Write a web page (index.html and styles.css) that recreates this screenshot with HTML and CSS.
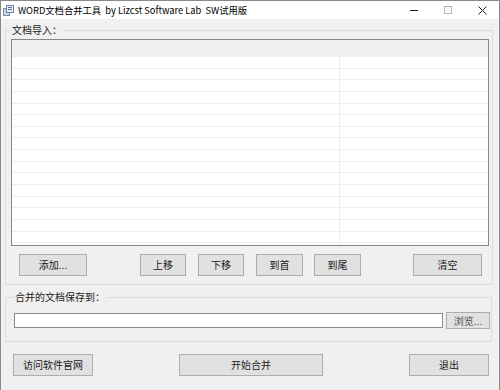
FILE: index.html
```html
<!DOCTYPE html>
<html lang="zh-CN">
<head>
<meta charset="utf-8">
<title>WORD文档合并工具</title>
<link rel="stylesheet" href="styles.css">
</head>
<body>
<div class="window">
  <div class="titlebar">
    <svg class="appicon" width="11" height="11" viewBox="0 0 11 11">
      <rect x="0.5" y="3.5" width="6" height="7" fill="#c9d6e6" stroke="#7d8fa8"/>
      <rect x="3.5" y="0.5" width="7" height="7" fill="#e8eef6" stroke="#6f86a6"/>
      <rect x="5" y="2" width="4" height="1" fill="#4f74a8"/>
      <rect x="5" y="4" width="4" height="1" fill="#4f74a8"/>
    </svg>
    <span class="title">WORD文档合并工具  by Lizcst Software Lab  SW试用版</span>
    <div class="controls">
      <span class="ctl">
        <svg width="8" height="8" viewBox="0 0 8 8"><line x1="0" y1="4.5" x2="8" y2="4.5" stroke="#222" stroke-width="1"/></svg>
      </span>
      <span class="ctl">
        <svg width="8" height="8" viewBox="0 0 8 8"><rect x="0.5" y="0.5" width="7" height="7" fill="none" stroke="#b8b8b8" stroke-width="1"/></svg>
      </span>
      <span class="ctl">
        <svg width="9" height="9" viewBox="0 0 9 9"><path d="M0.5 0.5L8.5 8.5M8.5 0.5L0.5 8.5" stroke="#222" stroke-width="1" fill="none"/></svg>
      </span>
    </div>
  </div>
  <div class="client">
    <fieldset class="group group-import">
      <legend>文档导入：</legend>
      <div class="listview">
        <div class="lv-header"></div>
        <div class="lv-body">
          <div class="lv-col lv-col1"></div>
          <div class="lv-col lv-col2"></div>
        </div>
      </div>
      <div class="btnrow">
        <button class="btn b-add">添加...</button>
        <button class="btn b-up">上移</button>
        <button class="btn b-down">下移</button>
        <button class="btn b-first">到首</button>
        <button class="btn b-last">到尾</button>
        <button class="btn b-clear">清空</button>
      </div>
    </fieldset>
    <fieldset class="group group-save">
      <legend>合并的文档保存到：</legend>
      <div class="pathrow">
        <input class="path" type="text" value="">
        <button class="btn b-browse">浏览...</button>
      </div>
    </fieldset>
    <div class="actions">
      <button class="btn b-site">访问软件官网</button>
      <button class="btn b-start">开始合并</button>
      <button class="btn b-exit">退出</button>
    </div>
  </div>
</div>
</body>
</html>
```

FILE: styles.css
```css
html, body {
  margin: 0;
  padding: 0;
  background: #f0f0f0;
}
body {
  font-family: "Noto Sans CJK SC", "Noto Sans", sans-serif;
  font-size: 10px;
  color: #1a1a1a;
}
.window {
  width: 500px;
  height: 390px;
  box-sizing: border-box;
  border: 1px solid #8a8a8a;
  border-bottom: none;
  background: #f0f0f0;
  display: flex;
  flex-direction: column;
  overflow: hidden;
}
.titlebar {
  height: 18px;
  background: #ffffff;
  display: flex;
  align-items: center;
  flex: none;
}
.appicon {
  margin-left: 2px;
  margin-top: 1px;
  flex: none;
}
.title {
  margin-left: 4px;
  white-space: pre;
  font-size: 9.3px;
  line-height: 18px;
  color: #000;
}
.controls {
  margin-left: auto;
  display: flex;
  height: 18px;
}
.ctl {
  width: 34px;
  height: 18px;
  display: flex;
  align-items: center;
  justify-content: center;
}
.client {
  flex: 1;
  display: flex;
  flex-direction: column;
}
.group {
  margin: 0;
  border: 1px solid #dcdcdc;
  min-width: 0;
}
.group legend {
  padding: 0 1px;
  line-height: 12px;
  font-size: 10px;
  color: #1a1a1a;
}
.group-import {
  margin: 5px 0 0 4px;
  width: 488px;
  box-sizing: border-box;
  padding: 3px 3px 8px 5px;
}
.listview {
  height: 207px;
  box-sizing: border-box;
  border: 1px solid #828790;
  background: #fff;
  display: flex;
  flex-direction: column;
}
.lv-header {
  height: 17px;
  background: #f0f0f0;
  flex: none;
}
.lv-body {
  flex: 1;
  display: flex;
  background-image: repeating-linear-gradient(to bottom, transparent 0, transparent 10.64px, #eeeeee 10.64px, #eeeeee 11.64px);
}
.lv-col1 {
  width: 327px;
  border-right: 1px solid #ececec;
}
.lv-col2 {
  flex: 1;
}
.btnrow {
  margin-top: 8px;
  display: flex;
  padding-left: 8px;
}
.btn {
  height: 22px;
  box-sizing: border-box;
  border: 1px solid #adadad;
  background: #e1e1e1;
  font-family: "Noto Sans CJK SC", "Noto Sans", sans-serif;
  font-size: 10px;
  color: #1a1a1a;
  padding: 0;
  margin: 0;
  line-height: 20px;
}
.b-add { width: 68px; }
.b-up { width: 46px; margin-left: 53px; }
.b-down { width: 46px; margin-left: 12px; }
.b-first { width: 47px; margin-left: 12px; }
.b-last { width: 47px; margin-left: 11px; }
.b-clear { width: 69px; margin-left: 52px; }
.group-save {
  margin: 6px 0 0 4px;
  width: 487px;
  box-sizing: border-box;
  padding: 9px 1px 12px 8px;
}
.pathrow {
  display: flex;
  align-items: center;
}
.path {
  flex: 1;
  min-width: 0;
  height: 15px;
  box-sizing: border-box;
  border: 1px solid #8a8a8a;
  background: #fff;
  margin: 0 3px 0 0;
  padding: 0;
}
.b-browse {
  width: 44px;
  height: 17px;
  line-height: 15px;
  color: #555;
}
.actions {
  margin-top: 12px;
  padding: 0 10px 0 12px;
  display: flex;
  justify-content: space-between;
}
.b-site { width: 80px; }
.b-start { width: 144px; }
.b-exit { width: 80px; }
```
